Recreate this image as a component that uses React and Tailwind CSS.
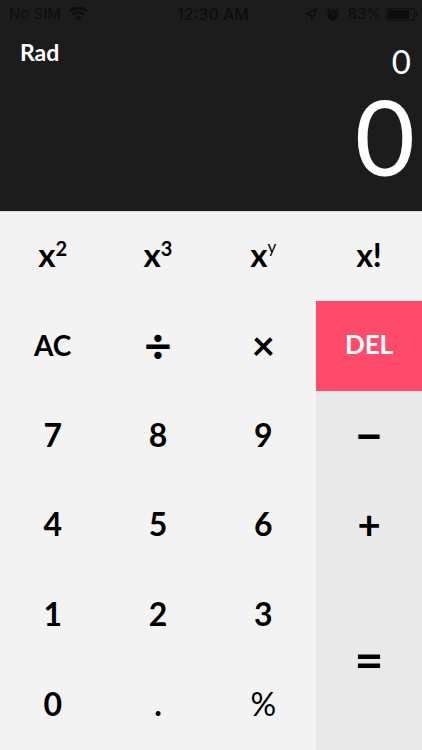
const Key = ({ children, className = '' }) => (
  <div className={`flex items-center justify-center pb-[2px] text-black font-bold ${className}`}>{children}</div>
);

const Power = ({ base, exp, expClass = '' }) => (
  <span className="flex items-start leading-none">
    <span className="text-[33px] leading-none">{base}</span>
    <span className={`leading-none ${expClass}`}>{exp}</span>
  </span>
);

const StatusBar = () => (
  <div className="flex h-7 items-center pl-[9px] pr-[5px] font-['Inter',sans-serif] text-[15px] text-[#0d0d0d]">
    <div className="flex w-[168px] items-center gap-[8px]">
      <span>No SIM</span>
      <svg width="19" height="14" viewBox="0 0 19 14" fill="#0d0d0d">
        <path d="M9.5 13.5 6.6 10.4a4.2 4.2 0 0 1 5.8 0L9.5 13.5Z" />
        <path d="M4.7 8.4 3 6.6a9.3 9.3 0 0 1 13 0l-1.7 1.8a6.9 6.9 0 0 0-9.6 0Z" />
        <path d="M1.8 5.3 0 3.4a13.8 13.8 0 0 1 19 0l-1.8 1.9a11.2 11.2 0 0 0-15.4 0Z" />
      </svg>
    </div>
    <span className="text-[16px] font-medium">12:30 AM</span>
    <div className="flex flex-1 items-center justify-end">
      <svg width="13" height="13" viewBox="0 0 13 13" fill="none" stroke="#0d0d0d" strokeWidth="1.3" className="mr-[8px]">
        <path d="M12 1 1 6.2l5.2.6.6 5.2L12 1Z" strokeLinejoin="round" />
      </svg>
      <svg width="14" height="14" viewBox="0 0 14 14" fill="#0d0d0d" className="mr-[8px]">
        <circle cx="7" cy="8" r="5.4" />
        <path d="M1 3.6 3.4 1.2l1 .9L2 4.5ZM13 3.6l-2.4-2.4-1 .9L12 4.5Z" />
        <path d="M7 4.6V8l2 1" stroke="#1c1c1c" strokeWidth="1" fill="none" />
      </svg>
      <span>83%</span>
      <div className="ml-[5px] flex items-center">
        <div className="h-[13px] w-[29px] rounded-[3px] border border-[#0d0d0d] p-[1px]">
          <div className="h-full w-[83%] rounded-[1px] bg-[#0d0d0d]" />
        </div>
        <div className="ml-[1px] h-[4px] w-[1px] bg-[#0d0d0d]" />
      </div>
    </div>
  </div>
);

export default function App() {
  return (
    <div className="flex h-[750px] w-[422px] flex-col overflow-hidden bg-[#f3f3f3] font-['Lato',sans-serif]">
      {/* Display */}
      <div className="h-[211px] shrink-0 bg-[#1c1c1c]">
        <StatusBar />
        <div className="flex items-start justify-between pl-[20px] pr-[11px] pt-[11px]">
          <span className="text-[23px] font-bold leading-[26px] text-white">Rad</span>
          <span className="mt-[9px] text-[33px] font-normal leading-[26px] text-white">0</span>
        </div>
        <div className="mt-[20px] pr-[7px] text-right text-[104px] font-normal leading-[84px] text-white">0</div>
      </div>

      {/* Keypad */}
      <div className="grid min-h-0 flex-1 grid-cols-[1fr_1fr_1fr_106px] grid-rows-6 text-[32px] shadow-[inset_0_1px_0_#d8d8d8]">
        <Key><Power base="x" exp="2" expClass="text-[20px]" /></Key>
        <Key><Power base="x" exp="3" expClass="text-[20px]" /></Key>
        <Key><Power base="x" exp="y" expClass="text-[17px] font-normal" /></Key>
        <Key className="text-[32px]">x!</Key>

        <Key className="text-[28px]">AC</Key>
        <Key className="text-[48px]">÷</Key>
        <Key className="text-[40px]">×</Key>
        <Key className="bg-[#fe4a6b] text-[26px]"><span className="text-white">DEL</span></Key>

        <Key>7</Key>
        <Key>8</Key>
        <Key>9</Key>
        <Key className="bg-[#e9e9e9] text-[48px]">−</Key>

        <Key>4</Key>
        <Key>5</Key>
        <Key>6</Key>
        <Key className="bg-[#e9e9e9] text-[40px]">+</Key>

        <Key>1</Key>
        <Key>2</Key>
        <Key>3</Key>
        <Key className="row-span-2 bg-[#e9e9e9] text-[50px]">=</Key>

        <Key>0</Key>
        <Key>.</Key>
        <Key className="font-normal">%</Key>
      </div>
    </div>
  );
}
